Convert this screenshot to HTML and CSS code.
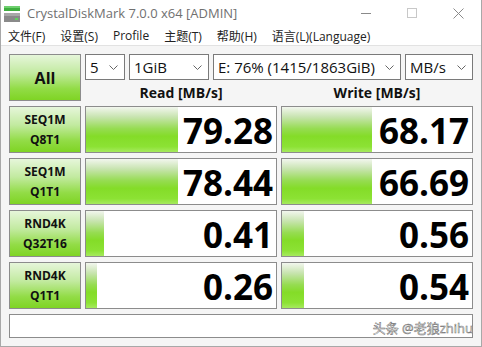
FILE: index.html
```html
<!DOCTYPE html>
<html lang="zh">
<head>
    <meta charset="UTF-8">
    <title>CrystalDiskMark 7.0.0 x64 [ADMIN]</title>
    <link rel="stylesheet" href="styles.css">
</head>
<body>
    <div class="window">
        <div class="titlebar">
            <svg class="app-icon" width="16" height="16" viewBox="0 0 16 16">
                <rect x="0" y="0" width="16" height="5" fill="#3fae3f"/>
                <rect x="0" y="0" width="16" height="2" fill="#6fd06f"/>
                <rect x="0" y="7" width="16" height="9" fill="#8a8a8a"/>
                <rect x="0" y="7" width="16" height="3" fill="#a8a8a8"/>
                <rect x="11" y="12" width="3" height="2" fill="#5fd35f"/>
            </svg>
            <span class="title">CrystalDiskMark 7.0.0 x64 [ADMIN]</span>
            <div class="controls">
                <span class="ctl"><svg width="11" height="11" viewBox="0 0 11 11"><path d="M0 5.5 H10" stroke="#8a8a8a" stroke-width="1"/></svg></span>
                <span class="ctl"><svg width="11" height="11" viewBox="0 0 11 11"><rect x="0.5" y="0.5" width="9" height="9" fill="none" stroke="#c8c8c8"/></svg></span>
                <span class="ctl"><svg width="11" height="11" viewBox="0 0 11 11"><path d="M0.5 0.5 L10.5 10.5 M10.5 0.5 L0.5 10.5" stroke="#8a8a8a" stroke-width="1"/></svg></span>
            </div>
        </div>

        <div class="menubar">
            <span>文件(F)</span>
            <span>设置(S)</span>
            <span>Profile</span>
            <span>主题(T)</span>
            <span>帮助(H)</span>
            <span>语言(L)(Language)</span>
        </div>

        <div class="main">
            <div class="btn btn-all">All</div>
            <div class="top-right">
                <div class="selects">
                    <div class="select w-count">5<svg width="9" height="5" viewBox="0 0 9 5"><path d="M0.5 0.5 L4.5 4.5 L8.5 0.5" fill="none" stroke="#666"/></svg></div>
                    <div class="select w-size">1GiB<svg width="9" height="5" viewBox="0 0 9 5"><path d="M0.5 0.5 L4.5 4.5 L8.5 0.5" fill="none" stroke="#666"/></svg></div>
                    <div class="select w-drive">E: 76% (1415/1863GiB)<svg width="9" height="5" viewBox="0 0 9 5"><path d="M0.5 0.5 L4.5 4.5 L8.5 0.5" fill="none" stroke="#666"/></svg></div>
                    <div class="select w-unit">MB/s<svg width="9" height="5" viewBox="0 0 9 5"><path d="M0.5 0.5 L4.5 4.5 L8.5 0.5" fill="none" stroke="#666"/></svg></div>
                </div>
                <div class="headers">
                    <div>Read [MB/s]</div>
                    <div>Write [MB/s]</div>
                </div>
            </div>

            <!-- SEQ1M Q8T1 -->
            <div class="btn btn-test">SEQ1M<br>Q8T1</div>
            <div class="result"><div class="fill" style="width: 92px"></div><span class="value">79.28</span></div>
            <div class="result"><div class="fill" style="width: 90px"></div><span class="value">68.17</span></div>

            <!-- SEQ1M Q1T1 -->
            <div class="btn btn-test">SEQ1M<br>Q1T1</div>
            <div class="result"><div class="fill" style="width: 92px"></div><span class="value">78.44</span></div>
            <div class="result"><div class="fill" style="width: 90px"></div><span class="value">66.69</span></div>

            <!-- RND4K Q32T16 -->
            <div class="btn btn-test">RND4K<br>Q32T16</div>
            <div class="result"><div class="fill" style="width: 18px"></div><span class="value">0.41</span></div>
            <div class="result"><div class="fill" style="width: 22px"></div><span class="value">0.56</span></div>

            <!-- RND4K Q1T1 -->
            <div class="btn btn-test">RND4K<br>Q1T1</div>
            <div class="result"><div class="fill" style="width: 11px"></div><span class="value">0.26</span></div>
            <div class="result"><div class="fill" style="width: 22px"></div><span class="value">0.54</span></div>

            <div class="status"><span class="watermark">头条 @老狼zhihu</span></div>
        </div>
    </div>
</body>
</html>
```

FILE: styles.css
```css
/* Ventana general */
body {
    margin: 0;
    font-family: 'Open Sans', 'Noto Sans CJK SC', sans-serif;
    background: #ffffff;
}

.window {
    width: 482px;
    height: 347px;
    box-sizing: border-box;
    border-left: 1px solid #a8a8a8;
    border-right: 1px solid #a8a8a8;
    border-bottom: 1px solid #a8a8a8;
    background: #f5f5f5;
    display: flex;
    flex-direction: column;
}

/* Barra de título */
.titlebar {
    height: 26px;
    background: #ffffff;
    display: flex;
    align-items: center;
    padding-left: 3px;
}

.app-icon {
    flex: none;
    margin-top: 1px;
}

.title {
    margin-left: 7px;
    font-size: 13px;
    color: #707070;
    white-space: nowrap;
}

.controls {
    margin-left: auto;
    display: flex;
    height: 26px;
}

.ctl {
    width: 46px;
    display: flex;
    justify-content: center;
    align-items: center;
}

/* Menú */
.menubar {
    height: 19px;
    background: #ffffff;
    border-bottom: 1px solid #e2e2e2;
    display: flex;
    align-items: center;
    gap: 15px;
    padding-left: 7px;
    font-size: 12px;
    color: #222222;
}

/* Área principal */
.main {
    flex: 1;
    padding: 8px 8px 8px 8px;
    display: grid;
    grid-template-columns: 72px 192px 192px;
    grid-template-rows: 47px repeat(4, 47px) 24px;
    column-gap: 4px;
    row-gap: 5px;
}

.btn {
    box-sizing: border-box;
    border: 1px solid #8c8c8c;
    background: linear-gradient(to bottom, #e6f6da 0%, #c2eaa0 40%, #92dc46 75%, #7fd424 100%);
    color: #111111;
    font-weight: bold;
    display: flex;
    flex-direction: column;
    justify-content: center;
    align-items: center;
    text-align: center;
}

.btn-all {
    font-size: 16px;
}

.btn-test {
    font-size: 12px;
    line-height: 20px;
}

.top-right {
    grid-column: 2 / 4;
    display: flex;
    flex-direction: column;
}

.selects {
    height: 26px;
    display: flex;
    gap: 4px;
}

.select {
    box-sizing: border-box;
    height: 26px;
    border: 1px solid #7a7a7a;
    background: #ffffff;
    display: flex;
    align-items: center;
    justify-content: space-between;
    padding: 0 6px 0 4px;
    font-size: 15px;
    color: #111111;
    white-space: nowrap;
}

.w-count { width: 40px; }
.w-size { width: 80px; }
.w-drive { width: 188px; }
.w-unit { width: 68px; }

.headers {
    flex: 1;
    display: grid;
    grid-template-columns: 192px 192px;
    column-gap: 4px;
    align-items: center;
    text-align: center;
    font-size: 14px;
    font-weight: bold;
    color: #111111;
    padding-top: 3px;
}

/* Resultados */
.result {
    position: relative;
    box-sizing: border-box;
    border: 1px solid #8c8c8c;
    background: #ffffff;
    display: flex;
    justify-content: flex-end;
    align-items: center;
    padding-right: 3px;
}

.fill {
    position: absolute;
    left: 0;
    top: 0;
    bottom: 0;
    background: linear-gradient(to bottom, #f2f6ee 0%, #c8e4b0 22%, #96dc52 48%, #84dc28 65%, #8ce234 88%, #a6ea5e 100%);
}

.value {
    position: relative;
    font-size: 35px;
    font-weight: bold;
    line-height: 1;
    color: #000000;
    margin-top: 2px;
}

/* Barra de estado */
.status {
    grid-column: 1 / 4;
    box-sizing: border-box;
    border: 1px solid #8c8c8c;
    background: #ffffff;
    display: flex;
    justify-content: flex-end;
    align-items: flex-end;
}

.watermark {
    font-size: 13px;
    line-height: 16px;
    color: #ffffff;
    -webkit-text-stroke: 0.5px #6a6a6a;
    margin-right: -1px;
    margin-bottom: 1px;
}
```
